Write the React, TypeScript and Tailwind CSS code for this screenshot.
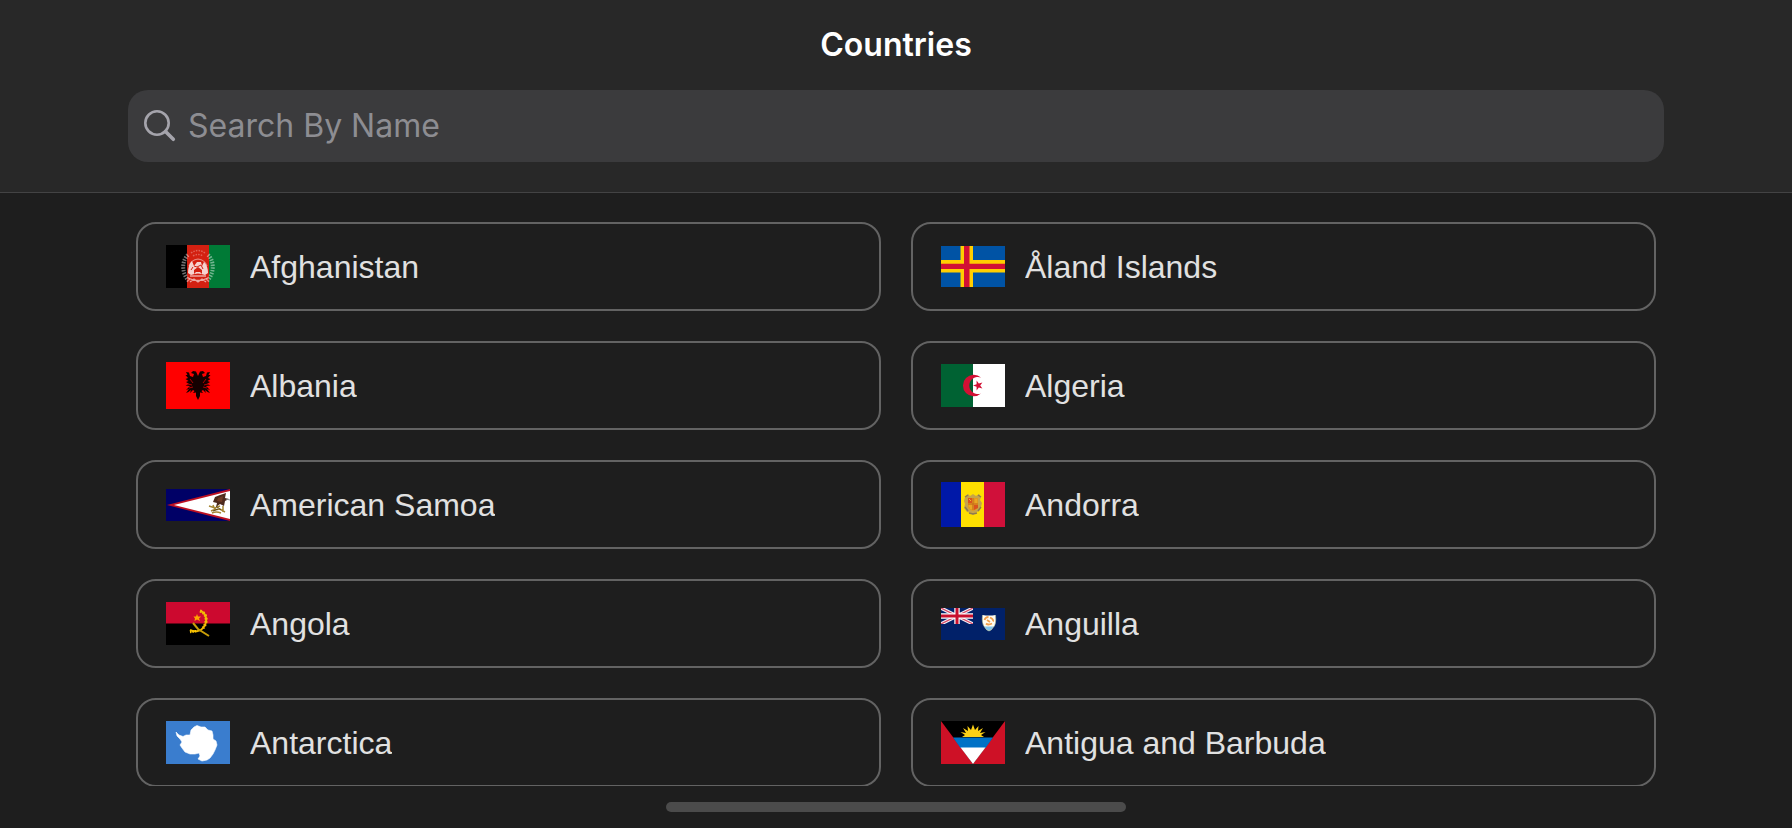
import type { ReactNode } from "react";

type Country = { name: string; flagHeight: number; flag: ReactNode };

const afghanistan = (
  <>
    <rect width="64" height="43" fill="#000" />
    <rect x="21" width="22" height="43" fill="#d32011" />
    <rect x="43" width="21" height="43" fill="#007a36" />
    <g fill="none" stroke="#fff">
      <path d="M22 10C16 15 15 28 23 36" strokeWidth="4" strokeDasharray="1.5 1.2" opacity="0.45" />
      <path d="M42 10C48 15 49 28 41 36" strokeWidth="4" strokeDasharray="1.5 1.2" opacity="0.45" />
      <path d="M25 8Q32 3 39 8M27 11Q32 8 37 11" strokeWidth="1.4" strokeDasharray="1.5 1.2" opacity="0.3" />
      <path d="M22 33Q32 38 42 33M24 31h16M24 37l4 -3 4 3 4 -3 4 3" strokeWidth="1.3" opacity="0.6" />
      <path d="M23 21q2 -6 9 -7q7 1 9 7" strokeWidth="1.2" opacity="0.45" />
    </g>
    <path d="M22 28q0 -8 4 -12l2 5 3 -4h4l1 4 2 -4q4 4 4 11l-3 2q-7 -3 -14 0z" fill="#fff" opacity="0.8" />
    <path d="M28 29v-4l4 -3 4 3v4l-2 -2h-4z" fill="#d32011" />
    <path d="M28 21l3 1 4 -2 2 4M25 25l2 -3" stroke="#d32011" fill="none" />
  </>
);

const aland = (
  <>
    <rect width="64" height="41" fill="#0053a5" />
    <path d="M19.500 0h12.500v41h-12.500zM0 14h64v12.500H0z" fill="#ffce00" />
    <path d="M23 0h5.500v41h-5.500zM0 17.700h64v5.200H0z" fill="#d21034" />
  </>
);

const albania = (
  <>
    <rect width="64" height="47" fill="#f00" />
    <path
      d="M32 14L30 9.500L27 9L25 11L28 12L27 15L24 14L23 10.500L20 10L21.500 13L19.500 13L22 16L19.500 17L22.500 19L20 20L23 22L19.500 23.500L24 24L20 28L23 27L20 31L22.500 30L25 28L24 31L27 28L28.500 29L27 31L30 30.500L30 34L32 38L34 34L34 30.500L37 31L35.500 29L37 28L40 31L39 28L41.500 30L44 31L41 27L44 28L40 24L44.500 23.500L41 22L44 20L41.500 19L44.500 17L42 16L44.500 13L42.500 13L44 10L41 10.500L40 14L37 15L36 12L39 11L37 9L34 9.500Z"
      fill="#140000"
    />
    <path d="M24 17l3 4M40 17l-3 4M22 22l4 1M42 22l-4 1M23 26l4 -1M41 26l-4 -1" stroke="#b00000" fill="none" />
  </>
);

const algeria = (
  <>
    <rect width="64" height="43" fill="#fff" />
    <rect width="32" height="43" fill="#006233" />
    <path d="M40 13.500A10.800 10.800 0 1 0 40 29.500A8.600 8.600 0 1 1 40 13.500Z" fill="#d21034" />
    <path
      d="M32 21.500L35.600 20.300L35.600 16.600L37.800 19.600L41.400 18.500L39.200 21.500L41.400 24.500L37.800 23.400L35.600 26.400L35.600 22.700Z"
      fill="#d21034"
    />
  </>
);

const americanSamoa = (
  <>
    <rect width="64" height="32" fill="#006" />
    <path d="M1 16L64 0v32z" fill="#bd1021" />
    <path d="M8 16L64 2v28z" fill="#fff" />
    <path d="M47 13L49 8L54 6L60 4L59 9L63 10L59 12L58 17L54 15L50 18L51 14Z" fill="#4d2a1c" />
    <path d="M52 9L57 7L56 13L51 12Z" fill="#6f3a23" />
    <path d="M60 10l4 1" stroke="#888" />
    <path
      d="M43 17l6 2 5 -2M47 16l2 5 5 -1 5 3M45 22l5 -2M46 24q4 -2 9 0M57 17v6"
      stroke="#a58632"
      strokeWidth="1.5"
      fill="none"
    />
    <path d="M47 22l5 -2M50 17l5 4" stroke="#5d4b22" />
  </>
);

const andorra = (
  <>
    <rect width="64" height="45" fill="#d0103a" />
    <rect width="43" height="45" fill="#fedf00" />
    <rect width="20" height="45" fill="#0018a8" />
    <path
      d="M24 15L27 12L29 14L32 12L35 14L38 12L40 15L39 18L41 21L40 25L38 29L34 31L32 33L30 31L26 30L23 26L24 22L23 19Z"
      fill="#c7a448"
    />
    <path d="M24 15l3 -2M37 13l3 2M24 25l3 4M40 25l-3 4M28 31l4 1 4 -1" stroke="#8d7a50" strokeWidth="1.5" fill="none" />
    <path d="M27 16h10v9q-1 3 -5 4q-4 -1 -5 -4z" fill="#e29a1f" />
    <path d="M27 16h4v5h-4zM33 23h4v3l-4 2z" fill="#d9531e" />
    <path d="M28 17l2 2M35 17v4M28 24h3M29 26h2" stroke="#f3b52b" />
    <path d="M27 22h10M32 16v12" stroke="#c1601c" strokeWidth="0.8" />
  </>
);

const angola = (
  <>
    <rect width="64" height="43" fill="#000" />
    <rect width="64" height="21.500" fill="#cc092f" />
    <path d="M34 9C41 11 42 20 37 26C34 30 28 30 24 28" stroke="#f0b800" strokeWidth="2" fill="none" />
    <path d="M34 9C41 11 42 20 37 26" stroke="#f5b80a" strokeWidth="3.200" strokeDasharray="1.6 1.6" fill="none" />
    <path d="M24 30l7 -1" stroke="#ffcb00" strokeWidth="2.500" strokeDasharray="1.4 1" />
    <path d="M27 21L32 27L43 34" stroke="#c99e08" strokeWidth="2" fill="none" />
    <path d="M31 12L32 14.500L35 14.500L33 16.500L34 19L31 17.500L28.500 19L29 16.500L27.500 14.500L30 14.500Z" fill="#ffa500" />
  </>
);

const anguilla = (
  <>
    <rect width="64" height="32" fill="#012169" />
    <path d="M0 0L32 16M32 0L0 16" stroke="#f4eef3" strokeWidth="3.400" />
    <path d="M0 0L32 16M32 0L0 16" stroke="#d64562" strokeWidth="1.200" />
    <path d="M16 0v16M0 8h32" stroke="#fff" strokeWidth="5.400" />
    <path d="M16 0v16M0 8h32" stroke="#c8102e" strokeWidth="3" />
    <path d="M32 16H0v4h36V0h-4z" fill="#012169" />
    <path d="M41.500 7q6.500 1 13 0q1 10 -2 12q-1.500 3 -4.500 4q-3 -1 -4.500 -4q-3 -4 -2 -12z" fill="#fffdf2" />
    <path d="M43.500 18.500h9q-1.500 3.500 -4.500 4.500q-3 -1 -4.500 -4.500z" fill="#7fc4ee" />
    <path d="M43.500 12q1 -3 4 -3M49 9.500q4 2 3 4M51 15.500q-4 2 -6 0M46 12l3 2" stroke="#f2a04c" strokeWidth="1.800" fill="none" />
    <path d="M41.500 7q-1 9 2 12q1.500 3 4.500 4q3 -1 4.500 -4q3 -3 2 -12" stroke="#a9b58e" strokeWidth="0.600" fill="none" />
  </>
);

const antarctica = (
  <>
    <rect width="64" height="43" fill="#3a7dce" />
    <path
      d="M10 11L13 14L17 15.500L20 14L24 14L25 9L28 6L31 4.500L35 6L39 6L42 9L46 10L47 14L47 18L50 20L51 24L49 29L47 33L44 37L41 39L36 40L32 38L34 35L33 32L29 33L24 33L19 31L16 27L14 24L16 21L14 18L11 15Z"
      fill="#fff"
      stroke="#fff"
      strokeWidth="0.600"
      strokeLinejoin="round"
    />
  </>
);

const antigua = (
  <>
    <rect width="64" height="43" fill="#ce1126" />
    <path d="M0 0h64L32 43z" fill="#000" />
    <path
      d="M21 16L24 14L19.500 11L25 12L22 7L27 10L26.500 5L30 9L32 3.500L34 9L37.500 5L37 10L42 7L39 12L44.500 11L40 14L43 16Z"
      fill="#fcd116"
    />
    <path d="M12 16.500h40L44.500 27h-25z" fill="#0072c6" />
    <path d="M19.500 26.500h25L32 43z" fill="#fff" />
  </>
);

const countries: Country[] = [
  { name: "Afghanistan", flagHeight: 43, flag: afghanistan },
  { name: "Åland Islands", flagHeight: 41, flag: aland },
  { name: "Albania", flagHeight: 47, flag: albania },
  { name: "Algeria", flagHeight: 43, flag: algeria },
  { name: "American Samoa", flagHeight: 32, flag: americanSamoa },
  { name: "Andorra", flagHeight: 45, flag: andorra },
  { name: "Angola", flagHeight: 43, flag: angola },
  { name: "Anguilla", flagHeight: 32, flag: anguilla },
  { name: "Antarctica", flagHeight: 43, flag: antarctica },
  { name: "Antigua and Barbuda", flagHeight: 43, flag: antigua },
];

function CountryCard({ country }: { country: Country }) {
  return (
    <button
      type="button"
      className="flex h-[89px] w-full items-center gap-5 rounded-[20px] border-2 border-[#636363] px-7 text-left"
    >
      <svg
        className="shrink-0"
        width="64"
        height={country.flagHeight}
        viewBox={`0 0 64 ${country.flagHeight}`}
        aria-hidden="true"
      >
        {country.flag}
      </svg>
      <span className="truncate text-[32px] leading-10 text-[#e1e1e1]">{country.name}</span>
    </button>
  );
}

export default function App() {
  return (
    <div className="flex h-screen flex-col bg-[#1e1e1e] font-['Liberation_Sans',Arial,sans-serif]">
      <header className="border-b border-[#434344] bg-[#282828] px-32 pb-[30px] font-[Inter,sans-serif]">
        <h1 className="flex h-[90px] items-center justify-center text-[32px] leading-10 font-semibold text-white">
          Countries
        </h1>
        <label className="flex h-[72px] items-center gap-3 rounded-[20px] bg-[#3b3b3d] px-4">
          <svg width="32" height="34" viewBox="0 0 32 34" fill="none" stroke="#a5a4ac" aria-hidden="true">
            <circle cx="13" cy="14" r="11.700" strokeWidth="2.600" />
            <path d="M21.500 22.500L29.300 30.300" strokeWidth="3.600" strokeLinecap="round" />
          </svg>
          <input
            type="text"
            aria-label="Search By Name"
            placeholder="Search By Name"
            className="min-w-0 flex-1 bg-transparent text-[32px] leading-10 text-white outline-none placeholder:text-[#8d8d92]"
          />
        </label>
      </header>
      <main className="min-h-0 flex-1 overflow-hidden px-34 pt-[29px]">
        <ul className="grid grid-cols-2 gap-[30px]">
          {countries.map((country) => (
            <li key={country.name}>
              <CountryCard country={country} />
            </li>
          ))}
        </ul>
      </main>
      <footer className="flex h-[42px] shrink-0 justify-center pt-4">
        <div className="h-2.5 w-[460px] rounded-full bg-[#4b4b4b]" />
      </footer>
    </div>
  );
}
